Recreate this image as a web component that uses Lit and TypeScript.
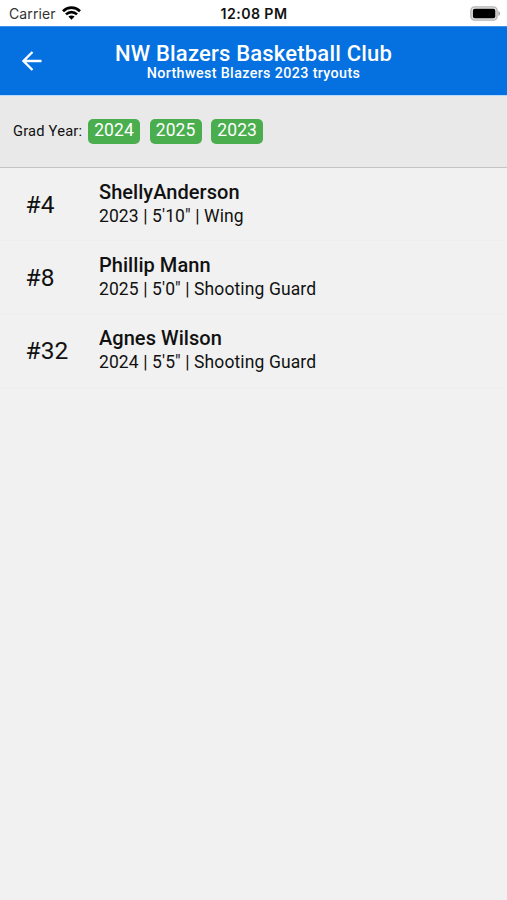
import { LitElement, html, css } from "lit";
import { customElement } from "lit/decorators.js";

interface Player {
  jersey: number;
  name: string;
  details: string;
}

const YEARS = ["2024", "2025", "2023"];

const PLAYERS: Player[] = [
  { jersey: 4, name: "ShellyAnderson", details: "2023 | 5'10\" | Wing" },
  { jersey: 8, name: "Phillip Mann", details: "2025 | 5'0\" | Shooting Guard" },
  { jersey: 32, name: "Agnes Wilson", details: "2024 | 5'5\" | Shooting Guard" },
];

@customElement("app-root")
export class AppRoot extends LitElement {
  static styles = css`
    :host {
      display: flex;
      flex-direction: column;
      height: 100vh;
      overflow: hidden;
      background: #f1f1f1;
      color: #111;
      font-family: Roboto, sans-serif;
      white-space: nowrap;
    }
    .status {
      display: grid;
      grid-template-columns: 1fr auto 1fr;
      align-items: center;
      box-sizing: border-box;
      height: 26px;
      padding: 0 8px 0 9px;
      background: #fff;
      font-family: Inter, sans-serif;
      font-size: 14px;
      line-height: 26px;
    }
    .carrier {
      display: flex;
      align-items: center;
      gap: 6px;
      color: #333;
      letter-spacing: 0.1px;
    }
    .carrier svg {
      margin-top: -1px;
    }
    .clock {
      font-size: 14.2px;
      font-weight: 600;
      letter-spacing: 0.4px;
      color: #111;
      padding-top: 1px;
    }
    .battery {
      justify-self: end;
      margin-right: -2px;
    }
    svg {
      display: block;
    }
    .bar {
      display: grid;
      grid-template-columns: 64px 1fr 64px;
      align-items: center;
      box-sizing: border-box;
      height: 69px;
      background: #0570e0;
      border-top: 1px solid #3c91ea;
      color: #fff;
    }
    .back {
      justify-self: center;
    }
    .titles {
      text-align: center;
      font-weight: 500;
    }
    .title {
      font-size: 22px;
      line-height: 22px;
      letter-spacing: 0.2px;
      padding-top: 3px;
    }
    .subtitle {
      font-size: 14.3px;
      line-height: 17px;
      letter-spacing: 0.37px;
    }
    .filters {
      display: flex;
      align-items: center;
      box-sizing: border-box;
      height: 73px;
      padding-left: 13px;
      background: #e9e9e9;
      border-top: 1px solid #b5d9fb;
      border-bottom: 1px solid #c4c4c4;
    }
    .label {
      width: 75px;
      padding-bottom: 1px;
      font-size: 14.7px;
      letter-spacing: 0.2px;
    }
    .chips {
      display: flex;
      gap: 9.6px;
    }
    .chip {
      width: 52px;
      height: 25px;
      border-radius: 5px;
      background: #4aae4e;
      color: #fff;
      text-align: center;
      font-size: 17.5px;
      line-height: 23px;
      letter-spacing: 0.1px;
    }
    .player {
      display: grid;
      grid-template-columns: 73.4px 1fr;
      align-items: center;
      box-sizing: border-box;
      height: 73.4px;
      padding-left: 25.6px;
      border-bottom: 1px solid #eeeeee;
    }
    .jersey {
      font-size: 24.5px;
    }
    .info {
      padding-bottom: 1.2px;
    }
    .name {
      font-size: 20px;
      line-height: 24px;
      font-weight: 500;
      letter-spacing: 0.05px;
    }
    .details {
      font-size: 17.5px;
      line-height: 24px;
      letter-spacing: 0.11px;
    }
  `;

  render() {
    return html`
      <div class="status">
        <div class="carrier">
          <span>Carrier</span>
          <svg width="19" height="14" viewBox="0 0 19 14" fill="none" stroke="#000" stroke-width="2.7">
            <path d="M1 5.2C5.8 0.5 13.2 0.5 18 5.2" />
            <path d="M4 8.4C7.2 5.3 11.8 5.3 15 8.4" />
            <path d="M9.5 13.7L6.4 10.6C8.2 9 10.8 9 12.6 10.6Z" fill="#000" stroke="none" />
          </svg>
        </div>
        <div class="clock">12:08 PM</div>
        <svg class="battery" width="31" height="15" viewBox="0 0 31 15">
          <rect x="0.9" y="0.9" width="26.2" height="13.2" rx="3.8" fill="#e4e4e4" stroke="#b4b4b4" stroke-width="1.4" />
          <rect x="2.9" y="2.8" width="22.4" height="9.4" rx="2" fill="#000" />
          <path d="M28.3 5C30.8 5.8 30.8 9.2 28.3 10Z" fill="#aaa" />
        </svg>
      </div>
      <header class="bar">
        <svg class="back" width="20" height="20" viewBox="0 0 20 20" fill="none" stroke="#fff" stroke-width="2.3">
          <path d="M19.5 10H2M10.5 1L1.5 10L10.5 19" />
        </svg>
        <div class="titles">
          <div class="title">NW Blazers Basketball Club</div>
          <div class="subtitle">Northwest Blazers 2023 tryouts</div>
        </div>
      </header>
      <section class="filters">
        <span class="label">Grad Year:</span>
        <div class="chips">${YEARS.map((y) => html`<div class="chip">${y}</div>`)}</div>
      </section>
      <main>
        ${PLAYERS.map(
          (p) => html`
            <div class="player">
              <div class="jersey">#${p.jersey}</div>
              <div class="info">
                <div class="name">${p.name}</div>
                <div class="details">${p.details}</div>
              </div>
            </div>
          `,
        )}
      </main>
    `;
  }
}
